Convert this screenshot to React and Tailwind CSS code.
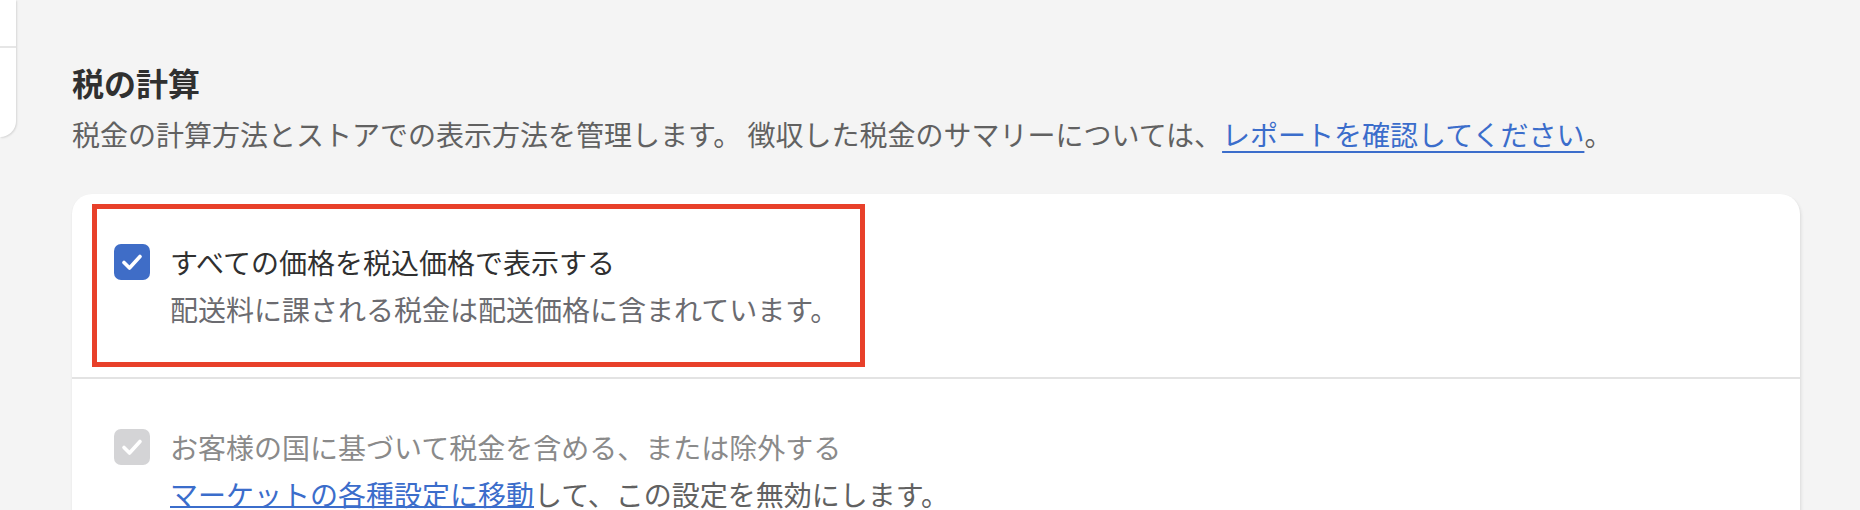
import React from "react";

const Check = ({ disabled }) => (
  <span
    className={`mt-[2px] flex h-[36px] w-[36px] shrink-0 items-center justify-center rounded-[7px] ${
      disabled ? "bg-[#d4d4d6]" : "bg-[#3f6dc7]"
    }`}
  >
    <svg width="36" height="36" viewBox="0 0 36 36" fill="none">
      <path
        d="M10 18.5l5.5 5.5 10.5-11.5"
        stroke="white"
        strokeWidth="3.6"
        strokeLinecap="round"
        strokeLinejoin="round"
      />
    </svg>
  </span>
);

const App = () => {
  return (
    <div className="flex h-[510px] w-full overflow-hidden bg-[#f4f4f4] font-['Noto_Sans_CJK_JP',sans-serif] text-[28px] leading-[40px]">
      {/* edge of the side card */}
      <div className="flex h-[137px] w-[16px] shrink-0 flex-col rounded-br-[16px] bg-white shadow-[1px_1px_2px_rgba(0,0,0,0.12)]">
        <div className="h-[48px] border-b-2 border-[#e6e6e6]" />
      </div>

      <main className="ml-[56px] flex w-[1728px] flex-col pt-[62px]">
        <h2 className="text-[32px] font-bold leading-[40px] text-[#303030]">
          税の計算
        </h2>
        <p className="mt-[12px] text-[#616161]">
          税金の計算方法とストアでの表示方法を管理します。
          徴収した税金のサマリーについては、
          <a className="text-[#3b6dcb] underline decoration-2 underline-offset-[5px]">
            レポートを確認してください
          </a>
          。
        </p>

        <div className="mt-[40px] rounded-[20px] bg-white shadow-[0_1px_2px_rgba(0,0,0,0.08),2px_2px_3px_rgba(0,0,0,0.06)]">
          <section className="relative border-b-2 border-[#e3e3e3] px-[42px] py-[48px]">
            <div className="flex items-start gap-[20px]">
              <Check />
              <div>
                <div className="text-[#303030]">
                  すべての価格を税込価格で表示する
                </div>
                <div className="mt-[7px] text-[#6b6b70]">
                  配送料に課される税金は配送価格に含まれています。
                </div>
              </div>
            </div>
            <div className="pointer-events-none absolute bottom-[10px] left-[20px] top-[10px] w-[773px] border-[5px] border-[#e8402a]" />
          </section>

          <section className="px-[42px] pb-[48px] pt-[48px]">
            <div className="flex items-start gap-[20px]">
              <Check disabled />
              <div>
                <div className="text-[#8a8a8a]">
                  お客様の国に基づいて税金を含める、または除外する
                </div>
                <div className="mt-[7px] text-[#616161]">
                  <a className="text-[#3b6dcb] underline decoration-2 underline-offset-[0px]">
                    マーケットの各種設定に移動
                  </a>
                  して、この設定を無効にします。
                </div>
              </div>
            </div>
          </section>
        </div>
      </main>
    </div>
  );
};

export default App;
